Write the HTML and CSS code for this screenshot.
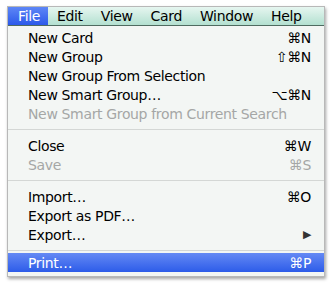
FILE: index.html
```html
<!DOCTYPE html>
<html lang="en">
<head>
  <meta charset="UTF-8">
  <title>File menu</title>
  <link rel="stylesheet" href="styles.css">
</head>
<body>
  <div class="frame">
    <!-- Menu bar -->
    <div class="menubar">
      <span class="title active">File</span>
      <span class="title">Edit</span>
      <span class="title">View</span>
      <span class="title">Card</span>
      <span class="title">Window</span>
      <span class="title">Help</span>
    </div>

    <!-- File menu -->
    <ul class="menu">
      <li class="item"><span>New Card</span><span class="key">⌘N</span></li>
      <li class="item"><span>New Group</span><span class="key">⇧⌘N</span></li>
      <li class="item"><span>New Group From Selection</span></li>
      <li class="item"><span>New Smart Group…</span><span class="key">⌥⌘N</span></li>
      <li class="item disabled"><span>New Smart Group from Current Search</span></li>
      <li class="sep"></li>
      <li class="item"><span>Close</span><span class="key">⌘W</span></li>
      <li class="item disabled"><span>Save</span><span class="key">⌘S</span></li>
      <li class="sep"></li>
      <li class="item"><span>Import…</span><span class="key">⌘O</span></li>
      <li class="item"><span>Export as PDF…</span></li>
      <li class="item"><span>Export…</span><span class="arrow">▶</span></li>
      <li class="sep tight"></li>
      <li class="item selected"><span>Print…</span><span class="key">⌘P</span></li>
    </ul>
  </div>
</body>
</html>
```

FILE: styles.css
```css
* {
  box-sizing: border-box;
}

body {
  margin: 0;
  padding: 6px 7px;
  background: #fff;
  font-family: 'DejaVu Sans', 'Lucida Grande', sans-serif;
  font-size: 14px;
  letter-spacing: -0.35px;
  color: #000;
}

.frame {
  width: 318px;
  height: 271px;
  background: #f3f6f4;
  border: 1px solid #b8b8b8;
  box-shadow: 1px 2px 3px rgba(0,0,0,0.35);
  overflow: hidden;
}

.menubar {
  display: flex;
  height: 19px;
  background: linear-gradient(#e6f6f0, #b3e0d0);
  border-bottom: 1px solid #4f6b60;
}

.title {
  padding: 0 9px;
  line-height: 18px;
}

.title.active {
  background: linear-gradient(#5d86f6, #2c59ea);
  color: #fff;
  padding: 0 8px 0 10px;
}

.menu {
  list-style: none;
  margin: 0;
  padding: 2px 0 0;
}

.item {
  display: flex;
  justify-content: space-between;
  align-items: center;
  height: 19px;
  padding: 0 13px 0 20px;
}

.disabled {
  color: #a5a7a6;
}

.sep {
  height: 1px;
  margin: 6px 0 6px;
  background: #d4d7d5;
}

.sep.tight {
  margin-bottom: 2px;
}

.arrow {
  font-size: 11px;
  color: #333;
}

.selected {
  background: linear-gradient(#6489f4, #2d5ce9);
  color: #fff;
}
```
